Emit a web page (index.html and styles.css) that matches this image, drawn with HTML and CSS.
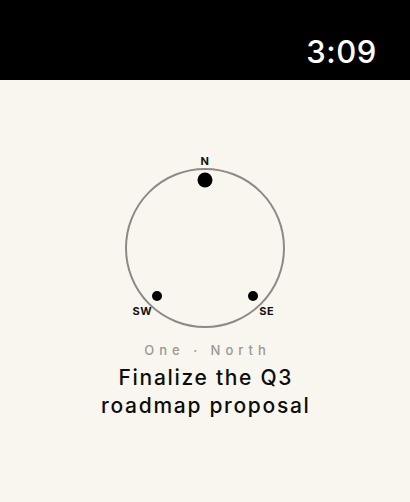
FILE: index.html
```html
<!DOCTYPE html>
<html lang="en">
<head>
<meta charset="utf-8">
<title>Compass</title>
<link rel="stylesheet" href="styles.css">
</head>
<body>
<header class="status">
  <span class="time">3:09</span>
</header>
<main class="screen">
  <div class="compass">
    <div class="ring"></div>
    <span class="dot dot-n"></span>
    <span class="dot dot-sw"></span>
    <span class="dot dot-se"></span>
    <span class="dir dir-n">N</span>
    <span class="dir dir-sw">SW</span>
    <span class="dir dir-se">SE</span>
  </div>
  <p class="meta">One · North</p>
  <h1 class="title">Finalize the Q3<br>roadmap proposal</h1>
</main>
</body>
</html>
```
FILE: styles.css
```css
html, body {
  margin: 0;
  padding: 0;
}
body {
  width: 410px;
  height: 502px;
  background: #f9f6ef;
  font-family: Inter, "Noto Sans", sans-serif;
  overflow: hidden;
}
.status {
  height: 80px;
  background: #000;
  display: flex;
  justify-content: flex-end;
  align-items: flex-end;
  padding: 0 33px 10px 0;
  box-sizing: border-box;
}
.time {
  color: #fff;
  font-size: 31px;
  font-weight: 500;
  line-height: 36px;
  letter-spacing: 0.6px;
}
.screen {
  display: flex;
  flex-direction: column;
  align-items: center;
  padding-top: 78px;
}
.compass {
  position: relative;
  width: 190px;
  height: 180px;
}
.ring {
  position: absolute;
  left: 15px;
  top: 10px;
  width: 160px;
  height: 160px;
  box-sizing: border-box;
  border: 2px solid #8c8a87;
  border-radius: 50%;
}
.dot {
  position: absolute;
  background: #000;
  border-radius: 50%;
  transform: translate(-50%, -50%);
}
.dot-n { left: 95px; top: 22.3px; width: 15px; height: 15px; }
.dot-sw { left: 46.7px; top: 138.3px; width: 10px; height: 10px; }
.dot-se { left: 142.7px; top: 138.3px; width: 10px; height: 10px; }
.dir {
  position: absolute;
  transform: translate(-50%, -50%);
  font-size: 11px;
  line-height: 11px;
  font-weight: 700;
  letter-spacing: 0.4px;
  color: #111;
}
.dir-n { left: 95px; top: 3px; }
.dir-sw { left: 32.3px; top: 153px; }
.dir-se { left: 156.7px; top: 153px; }
.meta {
  margin: 4px 0 0;
  padding-left: 5px;
  font-size: 13px;
  line-height: 16px;
  letter-spacing: 5px;
  color: #9a9893;
  font-weight: 500;
}
.title {
  margin: 6px 0 0;
  padding-left: 1.7px;
  font-size: 21px;
  line-height: 28px;
  font-weight: 500;
  letter-spacing: 1.7px;
  text-align: center;
  color: #0d0d0d;
}
```
